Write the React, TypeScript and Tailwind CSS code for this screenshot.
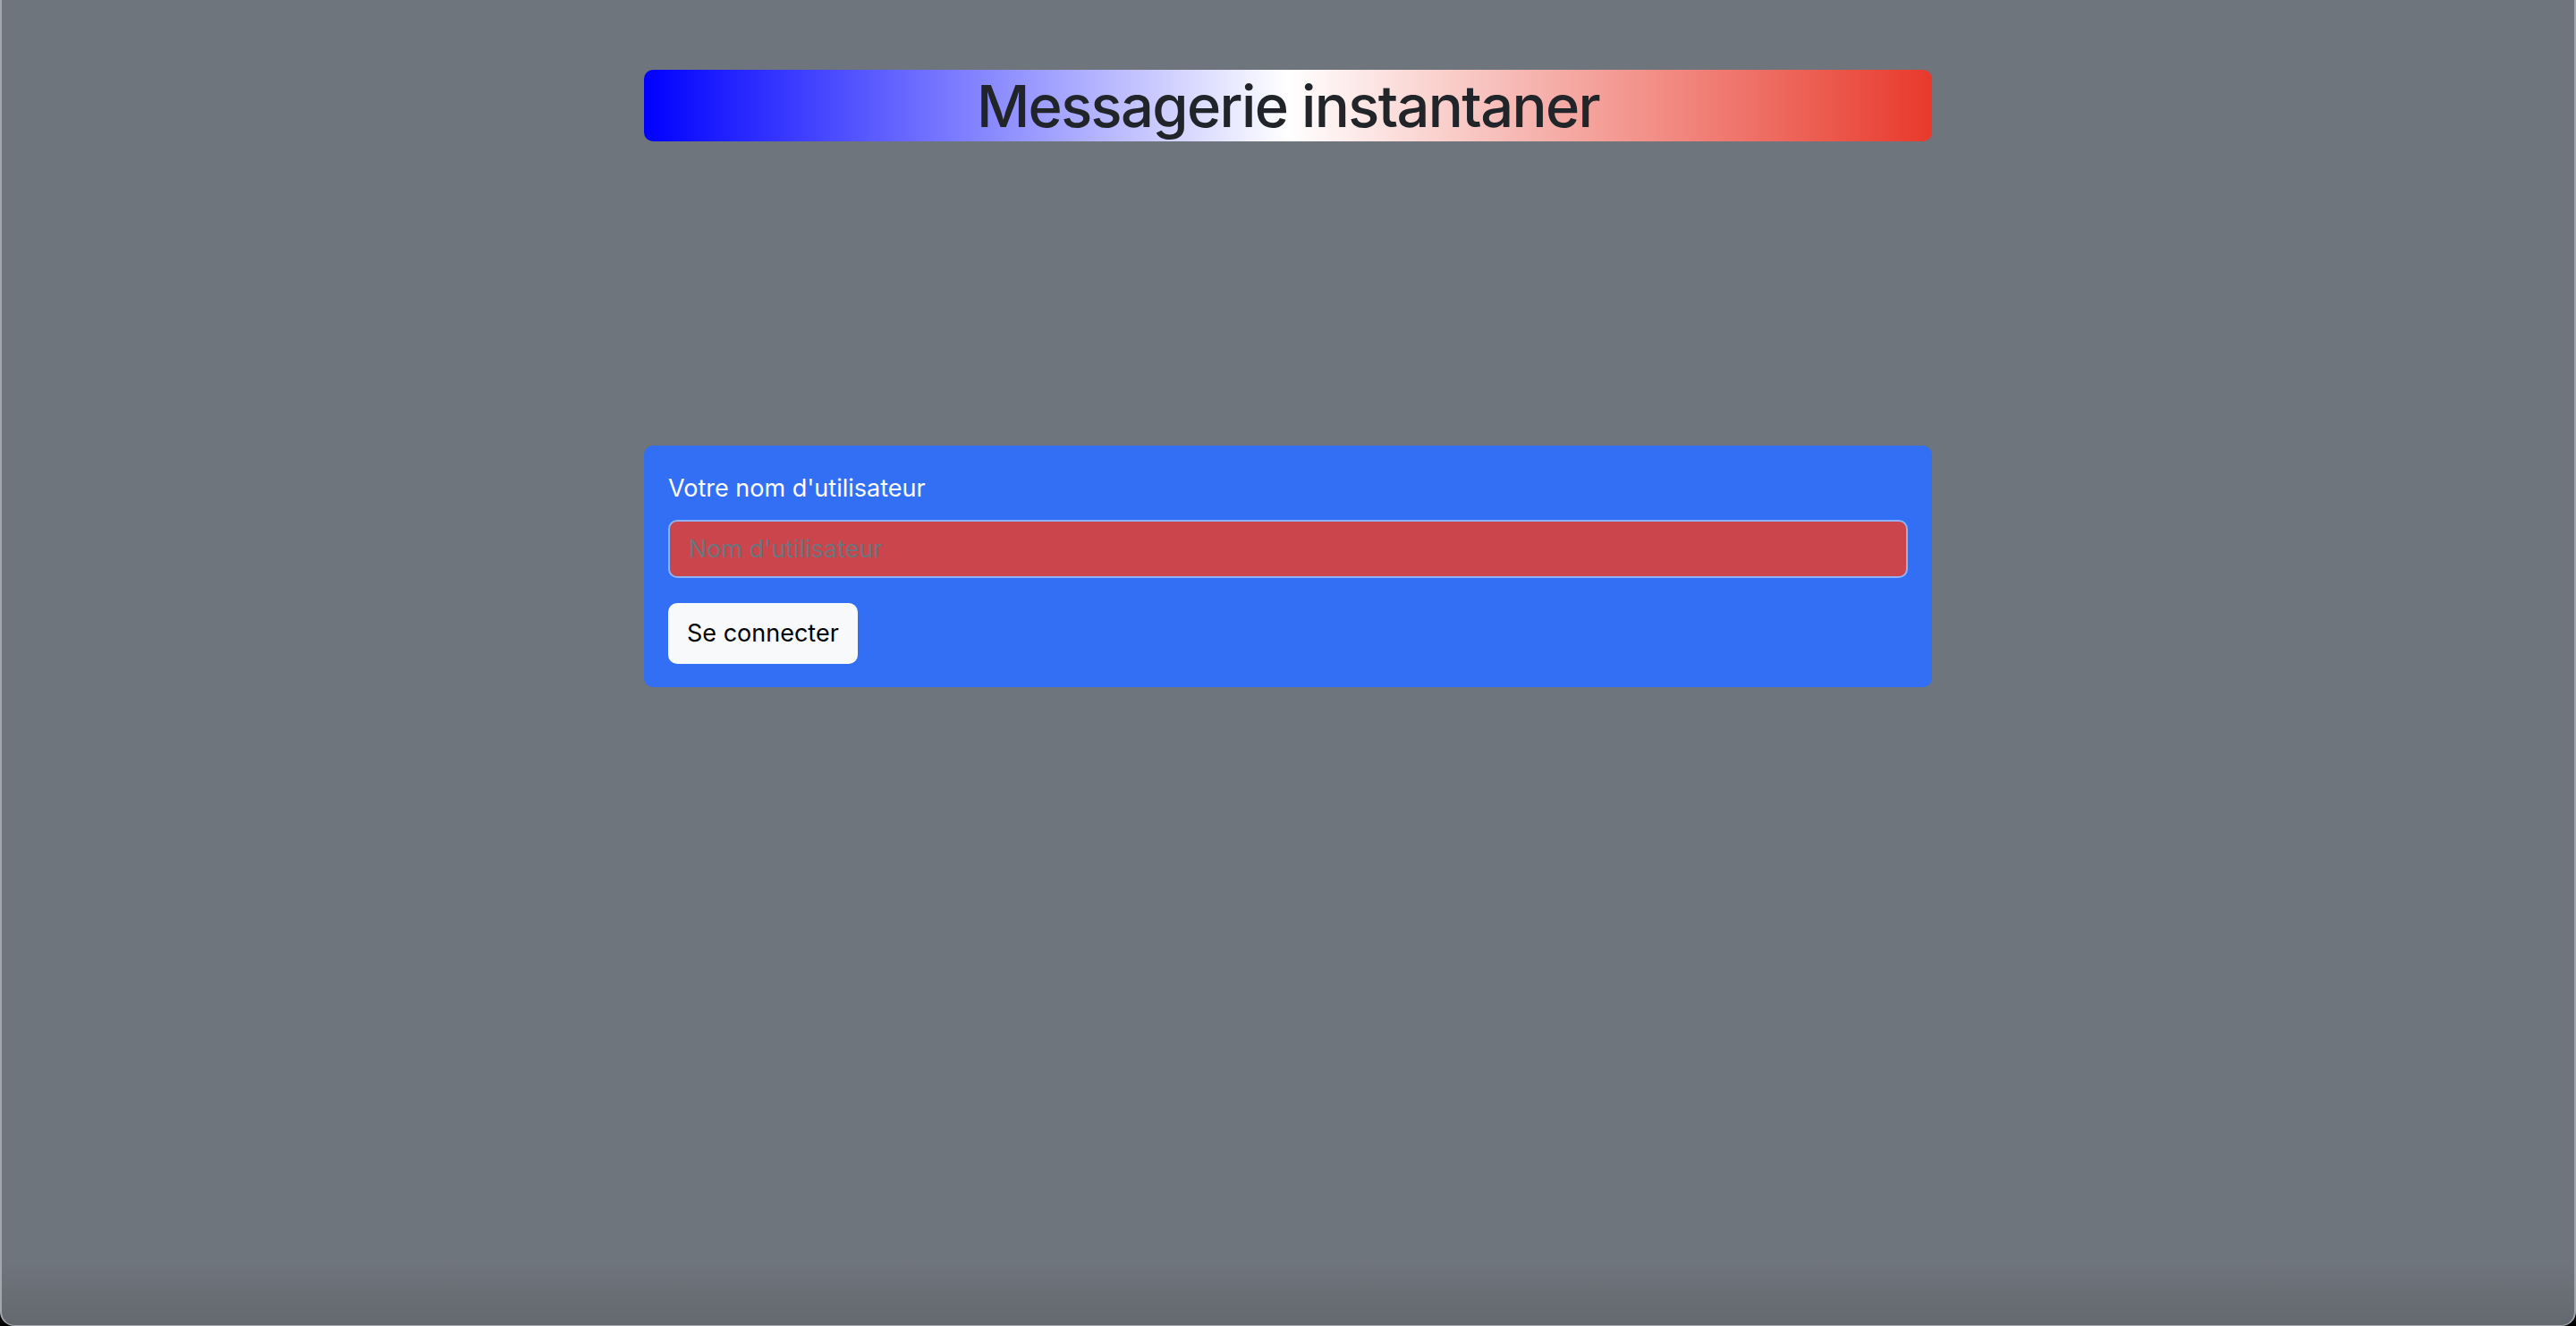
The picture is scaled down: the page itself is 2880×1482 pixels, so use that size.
import React from "react";

export default function App() {
  return (
    <div className="h-[1482px] w-[2880px] bg-black overflow-hidden">
      <div
        className="h-full w-full rounded-b-[16px] border-x-[2px] border-b-[1px] border-[#a3a7ad] bg-[linear-gradient(to_bottom,#6f757d_0px,#6f757d_1410px,#64686f_1482px)]"
        style={{ fontFamily: "Inter, 'Noto Sans', sans-serif" }}
      >
        <div className="mx-auto w-[1440px] pt-[78px]">
          <div className="flex h-[80px] items-center justify-center rounded-[10px] bg-[linear-gradient(to_right,#0000ff,#ffffff,#e8392b)]">
            <h1 className="text-[65px] leading-[80px] font-medium text-[#212529] tracking-[-1.6px] pt-[2px]">
              Messagerie instantaner
            </h1>
          </div>
          <div className="mt-[340px] rounded-[10px] bg-[#326ff4] px-[27px] pt-[27px] pb-[26px]">
            <label className="mb-[14px] block text-[27px] leading-[42px] text-white">
              Votre nom d'utilisateur
            </label>
            <input
              type="text"
              placeholder="Nom d'utilisateur"
              className="block h-[65px] w-full rounded-[10px] border-[2px] border-[#8fb3f8] bg-[#cb454c] px-[21px] text-[27px] text-[#212529] outline-none placeholder:text-[#6c757d]"
            />
            <button className="mt-[28px] h-[68px] rounded-[10px] bg-[#f8f9fa] px-[21px] text-[27px] leading-[42px] text-black">
              Se connecter
            </button>
          </div>
        </div>
      </div>
    </div>
  );
}
